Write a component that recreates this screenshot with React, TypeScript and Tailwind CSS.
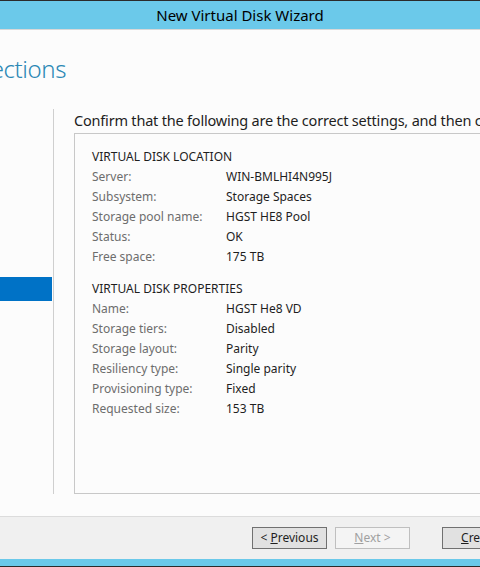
import React from "react";

const font = { fontFamily: '"Noto Sans", "Open Sans", sans-serif' };

const location: Array<[string, string]> = [
  ["Server:", "WIN-BMLHI4N995J"],
  ["Subsystem:", "Storage Spaces"],
  ["Storage pool name:", "HGST HE8 Pool"],
  ["Status:", "OK"],
  ["Free space:", "175 TB"],
];

const properties: Array<[string, string]> = [
  ["Name:", "HGST He8 VD"],
  ["Storage tiers:", "Disabled"],
  ["Storage layout:", "Parity"],
  ["Resiliency type:", "Single parity"],
  ["Provisioning type:", "Fixed"],
  ["Requested size:", "153 TB"],
];

function Section({ title, rows }: { title: string; rows: Array<[string, string]> }) {
  return (
    <div className="flex flex-col">
      <div className="h-[20px] leading-[20px] text-[12px] text-[#1e1e1e]">{title}</div>
      {rows.map(([label, value]) => (
        <div key={label} className="flex h-[20px] items-center text-[12px] leading-[20px]">
          <span className="w-[134px] shrink-0 text-[#6d6d6d]">{label}</span>
          <span className="text-[#1e1e1e] whitespace-nowrap">{value}</span>
        </div>
      ))}
    </div>
  );
}

function WizButton({
  children,
  disabled,
  className,
}: {
  children: React.ReactNode;
  disabled?: boolean;
  className?: string;
}) {
  return (
    <button
      disabled={disabled}
      className={
        "h-[22px] w-[75px] shrink-0 border text-[12px] leading-none " +
        (disabled
          ? "border-[#bfbfbf] bg-[#f4f4f4] text-[#a0a0a0] "
          : "border-[#707070] bg-[#e1e1e1] text-[#1e1e1e] ") +
        (className ?? "")
      }
    >
      {children}
    </button>
  );
}

export default function App() {
  return (
    <div className="flex h-[567px] w-[480px] flex-col overflow-hidden bg-[#fcfcfc]" style={font}>
      <div className="h-px bg-[#2b2b2b]" />
      <div className="flex h-[29px] items-center justify-center border-b border-[#d8d8d8] bg-[#6bc9ea] text-[15px] text-black">
        New Virtual Disk Wizard
      </div>

      <div className="flex flex-1 flex-col">
        <div className="mt-[21px] flex h-[36px] w-[66px] items-center justify-end overflow-hidden whitespace-nowrap text-[24px] font-light tracking-[-0.4px] text-[#2b88b5]">
          Confirm selections
        </div>

        <div className="mt-[22px] flex h-[385px]">
          <div className="w-[54px] shrink-0 border-r border-[#cfcfcf] pt-[168px]">
            <div className="h-[24px] w-[52px] bg-[#0072c6]" />
          </div>
          <div className="ml-[20px] flex flex-1 flex-col">
            <div className="h-[24px] whitespace-nowrap text-[14.5px] leading-[22px] tracking-[-0.2px] text-[#1e1e1e]">
              Confirm that the following are the correct settings, and then click Create.
            </div>
            <div className="w-[600px] flex-1 border border-[#c8c8c8] bg-[#fcfcfc] pl-[17px] pt-[13px]">
              <Section title="VIRTUAL DISK LOCATION" rows={location} />
              <div className="h-[12px]" />
              <Section title="VIRTUAL DISK PROPERTIES" rows={properties} />
            </div>
          </div>
        </div>
        <div className="flex-1" />
      </div>

      <div className="flex h-[43px] items-start gap-[8px] border-t border-[#dcdcdc] bg-[#f0f0f0] pl-[252px] pt-[10px]">
        <WizButton>
          &lt; <span className="underline">P</span>revious
        </WizButton>
        <WizButton disabled>
          <span className="underline">N</span>ext &gt;
        </WizButton>
        <WizButton className="ml-[24px]">
          <span className="underline">C</span>reate
        </WizButton>
      </div>
      <div className="h-[7px] bg-[#6bc9ea]" />
      <div className="h-px bg-[#2b2b2b]" />
    </div>
  );
}
